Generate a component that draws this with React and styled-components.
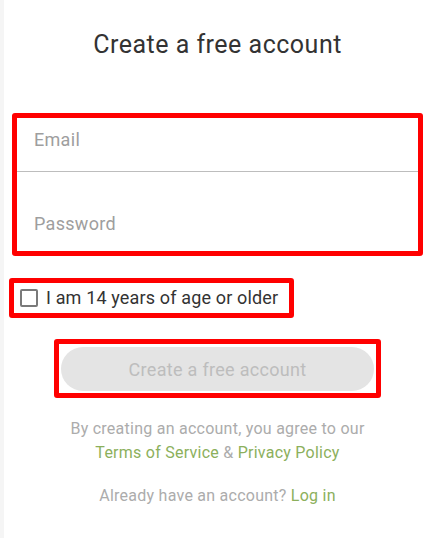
import React, { useState } from "react";
import styled, { createGlobalStyle } from "styled-components";

const GlobalStyle = createGlobalStyle`
  html, body {
    margin: 0;
    padding: 0;
    background: #ffffff;
  }
  body {
    font-family: Roboto, "Liberation Sans", Arial, sans-serif;
  }
  * { box-sizing: border-box; }
`;

const Page = styled.div`
  width: 431px;
  height: 538px;
  border-left: 4px solid #f5f5f5;
  padding-top: 31px;
  display: flex;
  flex-direction: column;
`;

const Title = styled.h1`
  margin: 0;
  font-size: 25px;
  line-height: 28px;
  font-weight: 400;
  letter-spacing: 0.5px;
  color: #333333;
  text-align: center;
`;

const Highlight = styled.div`
  border: 5px solid #ff0000;
  border-radius: 3px;
`;

const FieldGroup = styled(Highlight)`
  margin: 54px 8px 0 8px;
  display: flex;
  flex-direction: column;
`;

const Field = styled.input`
  border: none;
  outline: none;
  background: transparent;
  font-family: inherit;
  font-size: 18px;
  line-height: 22px;
  letter-spacing: 0.3px;
  color: #333;
  padding: ${(p) => p.$pad};
  &::placeholder {
    color: #9e9e9e;
  }
`;

const Divider = styled.div`
  height: 1px;
  background: #bdbdbd;
`;

const CheckWrap = styled(Highlight)`
  align-self: flex-start;
  margin: 22px 0 0 5px;
  padding: 4px 11px 4px 6px;
  display: flex;
  align-items: center;
  gap: 8px;
  cursor: pointer;
`;

const Box = styled.span`
  width: 18px;
  height: 18px;
  border: 2px solid #7a7a7a;
  border-radius: 2px;
  background: ${(p) => (p.$on ? "#7a7a7a" : "transparent")};
`;

const CheckLabel = styled.span`
  font-size: 18px;
  line-height: 22px;
  letter-spacing: 0.15px;
  color: #333333;
`;

const ButtonWrap = styled(Highlight)`
  align-self: center;
  margin-top: 21px;
  width: 327px;
  padding: 3px 2px 2px 2px;
`;

const SubmitButton = styled.button`
  width: 100%;
  height: 44px;
  border: none;
  border-radius: 22px;
  background: #e4e4e4;
  color: #bdbdbd;
  font-family: inherit;
  font-size: 18px;
  letter-spacing: 0.3px;
  cursor: default;
`;

const Note = styled.p`
  margin: ${(p) => p.$margin || "0"};
  font-size: 16px;
  line-height: 24px;
  letter-spacing: 0.25px;
  color: #acacac;
  text-align: center;
`;

const Green = styled.a`
  color: #8cb05c;
  text-decoration: none;
`;

export default function App() {
  const [agree, setAgree] = useState(false);

  return (
    <>
      <GlobalStyle />
      <Page>
        <Title>Create a free account</Title>
        <FieldGroup>
          <Field type="email" placeholder="Email" $pad="11px 17px 20px" />
          <Divider />
          <Field type="password" placeholder="Password" $pad="41px 17px 16px" />
        </FieldGroup>
        <CheckWrap onClick={() => setAgree(!agree)}>
          <Box $on={agree} />
          <CheckLabel>I am 14 years of age or older</CheckLabel>
        </CheckWrap>
        <ButtonWrap>
          <SubmitButton disabled={!agree}>Create a free account</SubmitButton>
        </ButtonWrap>
        <Note $margin="19px 0 0">
          By creating an account, you agree to our
          <br />
          <Green href="#">Terms of Service</Green> &amp;{" "}
          <Green href="#">Privacy Policy</Green>
        </Note>
        <Note $margin="19px 0 0">
          Already have an account? <Green href="#">Log in</Green>
        </Note>
      </Page>
    </>
  );
}
